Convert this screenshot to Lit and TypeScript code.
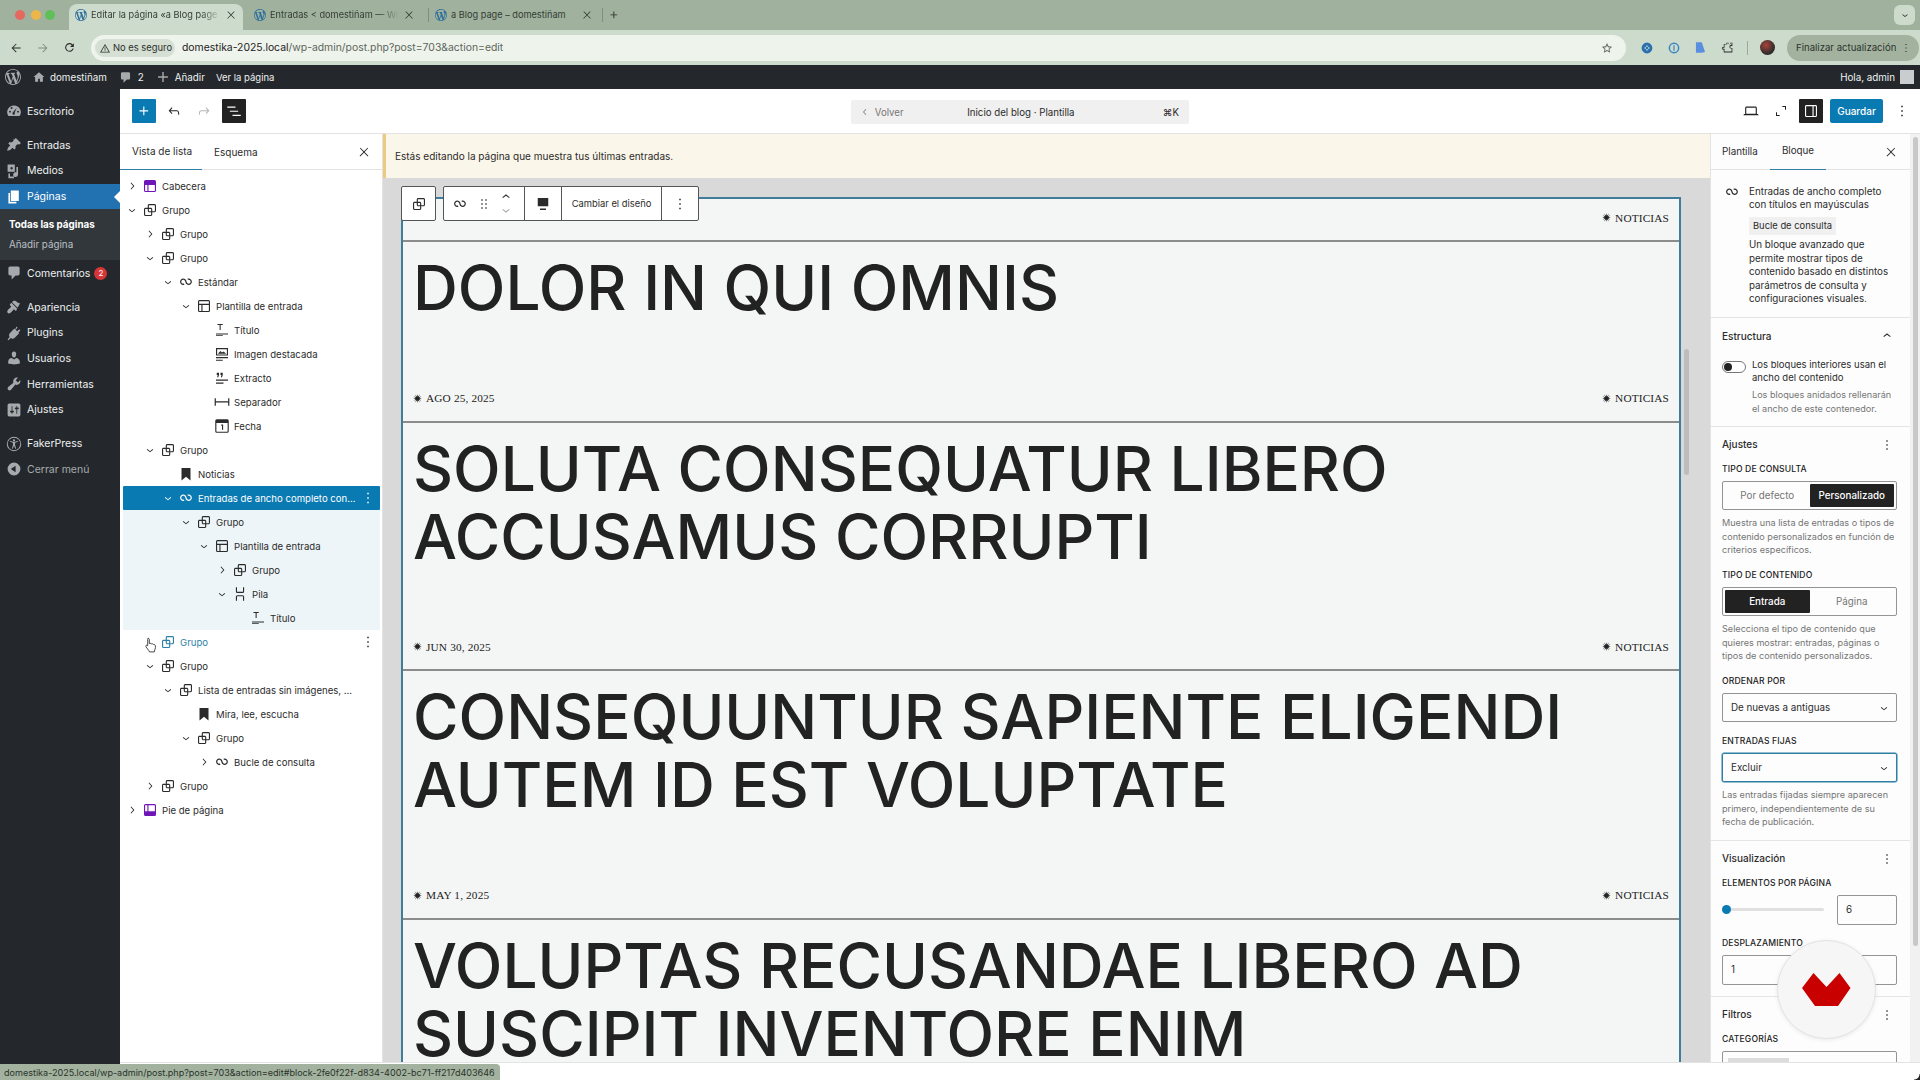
import { LitElement, html, css, svg } from "lit";
import { customElement } from "lit/decorators.js";

const P: Record<string, string> = {
  group: "M18 4h-7c-1.100 0-2 .9-2 2v3H6c-1.100 0-2 .9-2 2v7c0 1.100.9 2 2 2h7c1.100 0 2-.9 2-2v-3h3c1.100 0 2-.9 2-2V6c0-1.100-.9-2-2-2zm-4.500 14c0 .3-.2.5-.5.5H6c-.3 0-.5-.2-.5-.5v-7c0-.3.2-.5.5-.5h3V13c0 1.100.9 2 2 2h2.500v3zm0-4.500H11c-.3 0-.5-.2-.5-.5v-2.500H13c.3 0 .5.2.5.5v2.500zm5-.5c0 .3-.2.5-.5.5h-3V11c0-1.100-.9-2-2-2h-2.500V6c0-.3.2-.5.5-.5h7c.3 0 .5.2.5.5v7z",
  loop: "M18.182 11.639C18.182 13.080 17.014 14.249 15.573 14.249C14.358 14.249 13.335 13.418 13.045 12.292L13.038 12.262L13.028 12.233L12.398 10.377L12.394 10.378C11.857 8.650 10.246 7.394 8.340 7.394C5.995 7.394 4.094 9.295 4.094 11.639C4.094 13.984 5.995 15.884 8.340 15.884C8.885 15.884 9.408 15.781 9.889 15.592L9.292 14.070C8.998 14.185 8.677 14.249 8.340 14.249C6.898 14.249 5.730 13.080 5.730 11.639C5.730 10.198 6.898 9.030 8.340 9.030C9.554 9.030 10.577 9.860 10.867 10.986L10.877 11.026L10.891 11.065L11.507 12.864L11.513 12.861C12.041 14.609 13.665 15.884 15.573 15.884C17.917 15.884 19.818 13.984 19.818 11.639C19.818 9.295 17.917 7.394 15.573 7.394C15.012 7.394 14.484 7.503 14.002 7.701L14.623 9.214C14.910 9.096 15.227 9.030 15.573 9.030C17.014 9.030 18.182 10.198 18.182 11.639Z",
  header: "M18.500 10.500H10v8h8a.5.5 0 00.5-.5v-7.500zm-10 0h-3V18a.5.5 0 00.5.5h2.500v-8zM6 4h12a2 2 0 012 2v12a2 2 0 01-2 2H6a2 2 0 01-2-2V6a2 2 0 012-2z",
  footer: "M18 5.500h-8v8h8.500V6a.5.5 0 00-.5-.5zm-9.500 8h-3V6a.5.5 0 01.5-.5h2.500v8zM6 4h12a2 2 0 012 2v12a2 2 0 01-2 2H6a2 2 0 01-2-2V6a2 2 0 012-2z",
  template: "M18 5.500H6a.5.5 0 00-.5.5v3h13V6a.5.5 0 00-.5-.5zm.5 5H10v8h8a.5.5 0 00.5-.5v-7.500zm-10 0h-3V18a.5.5 0 00.5.5h2.500v-8zM6 4h12a2 2 0 012 2v12a2 2 0 01-2 2H6a2 2 0 01-2-2V6a2 2 0 012-2z",
  title: "M4 16.500h16V18H4zM4 20h9v-1H4zM6 4h7v1.300H10.200V12H8.800V5.300H6z",
  image: "M4 4h16v10H4zm1.500 1.500v7h13v-7zM7 11l3-3 2 2 2-1.500 3 2.500v.5H7zM4 16h16v1.500H4zM4 19.500h9V21H4z",
  excerpt: "M5 5h3v3l-1 3H5.500l.8-3H5zm5 0h3v3l-1 3h-1.500l.8-3H10zM4 14h16v1.500H4zM4 18h10v1.500H4z",
  sep: "M20.200 7v4H3.800V7H2.200v10h1.600v-4.500h16.400V17h1.600V7z",
  date: "M19 3H5a2 2 0 00-2 2v14a2 2 0 002 2h14a2 2 0 002-2V5a2 2 0 00-2-2zm.5 16a.5.5 0 01-.5.5H5a.5.5 0 01-.5-.5V8h15v11zM11 10h2.500v7H12v-5.500h-1z",
  bookmark: "M6 4h12v16.500l-6-4.700-6 4.700z",
  stack: "M17.500 3v5.500a2 2 0 01-2 2h-7a2 2 0 01-2-2V3H8v5.500a.5.5 0 00.5.5h7a.5.5 0 00.5-.5V3h1.500zm0 18v-5.500a2 2 0 00-2-2h-7a2 2 0 00-2 2V21H8v-5.500a.5.5 0 01.5-.5h7a.5.5 0 01.5.5V21h1.500z",
  kebab: "M13 19h-2v-2h2v2zm0-6h-2v-2h2v2zm0-6h-2V5h2v2z",
  close: "M13 11.800l6.100-6.300-1-1-6.100 6.200-6.100-6.200-1 1 6.100 6.300-6.500 6.700 1 1L12 13.100l6.500 6.400 1-1z",
  plus: "M11 12.500V17.500H12.500V12.500H17.500V11H12.500V6H11V11H6V12.500H11Z",
  undo: "M18.300 11.700c-.6-.6-1.400-.9-2.300-.9H6.700l2.900-3.300-1.100-1-4.500 5L8.500 16.500l1.100-1-2.900-3.300H16c.5 0 .9.2 1.300.5 1 1 1 3.400 1 4.500v.3h1.500v-.2c0-1.500 0-4.300-1.500-5.800z",
  redo: "M15.600 6.500l-1.100 1 2.900 3.300H8c-.9 0-1.700.3-2.300.9-1.400 1.500-1.400 4.200-1.400 5.600v.2h1.500v-.3c0-1.100 0-3.500 1-4.500.3-.3.7-.5 1.300-.5h9.200L14.500 15.500l1.100 1 4.500-5-4.500-5z",
  listview: "M3 6h11v1.500H3V6zm3.500 5.500h11V13h-11v-1.500zM21 17H10v1.500h11V17z",
  laptop: "M20.500 16h-.7V8c0-1.100-.9-2-2-2H6.200c-1.100 0-2 .9-2 2v8h-.7c-.8 0-1.500.7-1.500 1.500h20c0-.8-.7-1.500-1.500-1.500zM5.700 8c0-.3.2-.5.5-.5h11.600c.3 0 .5.2.5.5v7.600H5.700V8z",
  expand: "M6 14H4.500v5.500H10V18H6v-4zM14 4.500V6h4v4h1.500V4.500H14z",
  sidebar: "M18 4H6c-1.100 0-2 .9-2 2v12c0 1.100.9 2 2 2h12c1.100 0 2-.9 2-2V6c0-1.100-.9-2-2-2zM5.500 18V6c0-.3.2-.5.5-.5h8v13H6c-.3 0-.5-.2-.5-.5zm13 0c0 .3-.2.5-.5.5h-2.500v-13H18c.3 0 .5.2.5.5v12z",
  drag: "M8 7h2V5H8v2zm0 6h2v-2H8v2zm0 6h2v-2H8v2zm6-14v2h2V5h-2zm0 8h2v-2h-2v2zm0 6h2v-2h-2v2z",
  up: "M6.500 12.400L12 8l5.500 4.400-.9 1.200L12 10l-4.500 3.600-1-1.200z",
  down: "M17.500 11.600L12 16l-5.500-4.400.9-1.200L12 14l4.500-3.600 1 1.200z",
  right: "M10.600 6L9.500 7l4.600 5-4.600 5 1.100 1 5.500-6z",
  left: "M14.600 7l-1.200-1L8 12l5.400 6 1.200-1-4.600-5z",
  align: "M5 4h14v11H5zM8 18h8v2H8z",
  wp: "M20 10c0-5.510-4.490-10-10-10C4.480 0 0 4.490 0 10c0 5.520 4.480 10 10 10 5.510 0 10-4.480 10-10zM7.780 15.370L4.370 6.220c.55-.02 1.170-.08 1.170-.08.5-.06.44-1.130-.06-1.110 0 0-1.450.11-2.370.11-.18 0-.37 0-.58-.01C4.120 2.690 6.870 1.090 10 1.090c2.330 0 4.450.87 6.050 2.340-.68-.11-1.650.39-1.650 1.580 0 .74.45 1.360.9 2.100.35.61.55 1.360.55 2.460 0 1.490-1.400 5-1.400 5l-3.030-8.370c.54-.02.82-.17.82-.17.5-.05.44-1.250-.06-1.220 0 0-1.440.12-2.380.12-.87 0-2.330-.12-2.330-.12-.5-.03-.56 1.200-.06 1.220l.92.08 1.260 3.410zM17.410 10c.24-.64.74-1.870.43-4.250.7 1.290 1.050 2.710 1.050 4.250 0 3.290-1.730 6.240-4.400 7.780.97-2.590 1.940-5.200 2.920-7.780zM6.100 18.090C3.120 16.650 1.110 13.530 1.110 10c0-1.300.23-2.480.72-3.590C3.250 10.300 4.670 14.200 6.100 18.090zm4.030-6.630l2.580 6.980c-.86.29-1.760.45-2.710.45-.79 0-1.570-.11-2.290-.33.81-2.380 1.620-4.740 2.420-7.100z",
  home: "M10 2L1 10h2.500v8h5v-5h3v5h5v-8H19z",
  comment: "M5 2h10c1.100 0 2 .9 2 2v7c0 1.100-.9 2-2 2h-3l-5 5v-5H5c-1.100 0-2-.9-2-2V4c0-1.100.9-2 2-2z",
  addnew: "M9 3h2v6h6v2h-6v6H9v-6H3V9h6z",
  gauge: "M10 3a8.500 8.500 0 00-7 13.300h14A8.500 8.500 0 0010 3zM5 12a1.200 1.200 0 110-2.400A1.200 1.200 0 015 12zm2-4.500a1.200 1.200 0 110-2.400 1.200 1.200 0 010 2.400zM10 15a2 2 0 01-1-3.700L13.500 6l-2.700 6.300A2 2 0 0110 15zm5-3a1.200 1.200 0 110-2.400 1.200 1.200 0 010 2.400z",
  pin: "M10.440 3.020l1.820-1.820 6.360 6.350-1.830 1.820c-1.050-.68-2.480-.57-3.410.36l-.75.75c-.92.93-1.040 2.350-.35 3.410l-1.830 1.820-2.410-2.420-2.830 2.830-3.820 1.060 1.060-3.820 2.830-2.830-2.410-2.410 1.820-1.830c1.060.69 2.480.57 3.410-.36l.75-.75c.93-.92 1.050-2.350.36-3.410z",
  media: "M2 2h9v9H2zm5 6a1.500 1.500 0 100-3 1.500 1.500 0 000 3zM13 5h2v9.500a3 3 0 11-2-2.800zM3 13h2v4h5v2H3z",
  pages: "M6 15V2h10v13H6zm-1 1h8v2H3V5h2v11z",
  brush: "M14.500 11L7.500 4l1.500-1.500c.5-.5 2.300-.5 3.500.3 1.200.8 1.400 1.300 2.700 2 1.200.7 2.100.5 2.600.1zM13.800 11.800L6.700 4.700 5 6.500c-.4.4-.4 1 0 1.400l1 1c.4.4.4 1 0 1.400-1.700 1.700-4.500 3-4.500 5.700 0 1 1 2 2 2 2.700 0 4-2.800 5.700-4.500.4-.4 1-.4 1.400 0l1 1c.4.4 1 .4 1.400 0z",
  plug: "M13.100 2l1.400 1.400-2.500 2.500 2 2 2.500-2.500L18 6.900l-2.500 2.500 1 1-5.500 5.500c-1.500 1.500-3.500 1.500-5 .5L3 19l-1-1 2.500-3c-1-1.500-1-3.500.5-5l5.500-5.500 1 1z",
  user: "M10 9.250c-2.270 0-2.730-3.440-2.730-3.440C7 4.020 7.820 2 9.970 2c2.160 0 2.980 2.020 2.710 3.810 0 0-.41 3.440-2.680 3.440zm0 2.570L12.720 10c2.390 0 4.520 2.330 4.520 4.530v2.490s-3.650 1.130-7.240 1.130c-3.650 0-7.240-1.130-7.240-1.130v-2.490c0-2.250 1.940-4.480 4.470-4.480z",
  wrench: "M16.680 9.770c-1.340 1.340-3.300 1.670-4.950.99l-5.410 6.520c-.99.99-2.590.99-3.570 0-.99-.98-.99-2.580 0-3.570l6.520-5.420c-.68-1.650-.35-3.610.99-4.950 1.280-1.280 3.120-1.620 4.720-1.060l-2.890 2.890 2.820 2.820 2.860-2.870c.53 1.580.18 3.390-1.090 4.670z",
  sliders: "M18 16V4c0-1.100-.9-2-2-2H4c-1.100 0-2 .9-2 2v12c0 1.100.9 2 2 2h12c1.100 0 2-.9 2-2zM8 11h1c.55 0 1 .45 1 1s-.45 1-1 1H8v1.500c0 .28-.22.5-.5.5s-.5-.22-.5-.5V13H6c-.55 0-1-.45-1-1s.45-1 1-1h1V5.500c0-.28.22-.5.5-.5s.5.22.5.5V11zm5-2h-1c-.55 0-1-.45-1-1s.45-1 1-1h1V5.500c0-.28.22-.5.5-.5s.5.22.5.5V7h1c.55 0 1 .45 1 1s-.45 1-1 1h-1v5.500c0 .28-.22.5-.5.5s-.5-.22-.5-.5V9z",
  access: "M10 1a9 9 0 100 18 9 9 0 000-18zm0 1.200a7.800 7.800 0 110 15.600 7.800 7.800 0 010-15.600zM10 4a1.400 1.400 0 110 2.800A1.400 1.400 0 0110 4zM5 7.300l3.700 1v2.500L7.400 15.500l1.100.4L10 12l1.500 3.900 1.100-.4-1.300-4.700V8.300l3.700-1-.3-1.100-3.400.9H8.700l-3.400-.9z",
  collapse: "M10 2a8 8 0 110 16 8 8 0 010-16zm2 4l-6 4 6 4z",
  warn: "M12 4L2 21h20zm0 3l7.400 12.500H4.600zM11.200 10.500h1.600v5h-1.600zm0 6h1.600v1.600h-1.600z",
  back: "M20 11.200H7.400l5.600-5.600L11.900 4.500 4.400 12l7.500 7.500 1.100-1.100-5.600-5.600H20z",
  fwd: "M4 11.200h12.600L11 5.600l1.100-1.100 7.500 7.500-7.500 7.500-1.100-1.100 5.600-5.600H4z",
  reload: "M17.700 6.300A8 8 0 1019.700 14h-2.100a6 6 0 11-1.400-6.200L13 11h7V4z",
  star: "M12 3.500l2.600 5.600 6.100.7-4.500 4.200 1.200 6-5.400-3-5.400 3 1.200-6L3.300 9.800l6.100-.7zm0 3.600L10.400 10.600l-3.800.4 2.800 2.600-.8 3.700L12 15.500l3.400 1.800-.8-3.700 2.800-2.600-3.800-.4z",
  puzzle: "M10 3h4v2a1.500 1.500 0 003 0V3h4v6h-2a2 2 0 000 4h2v8H5v-5H4a2.500 2.500 0 010-5h1V6h5zm-3.500 4.500v5H4a1 1 0 000 2h2.500v5h13v-5.500H19a3.500 3.500 0 010-7h.5v-3h-1.200a3 3 0 01-5.600 0h-1.200v2z",
  ext1: "M10 1a9 9 0 100 18 9 9 0 000-18zm0 4l2 3h-4zm5 5l-3 2V8zm-5 5l-2-3h4zm-5-5l3-2v4z",
  ext2: "M10 1a9 9 0 100 18 9 9 0 000-18zm0 2.500a6.500 6.500 0 110 13 6.500 6.500 0 010-13zM9 5.500h2v9H9z",
  ext3: "M3 2h9l5 15-5 1H3z",
};

const ic = (n: string, size = 18, vb = 24) =>
  html`<svg class="ic" width=${size} height=${size} viewBox="0 0 ${vb} ${vb}" fill="currentColor" aria-hidden="true">${svg`<path fill-rule="evenodd" d=${P[n]}></path>`}</svg>`;

const STAR_POINTS = Array.from({ length: 24 }, (_, i) => {
  const a = (i * Math.PI) / 12;
  const r = i % 2 === 0 ? 5 : 2.1;
  return `${(5 + r * Math.sin(a)).toFixed(2)},${(5 - r * Math.cos(a)).toFixed(2)}`;
}).join(" ");
const burst = html`<svg class="ic" width="9" height="9" viewBox="0 0 10 10" fill="#222" aria-hidden="true">${svg`<polygon points=${STAR_POINTS}></polygon>`}</svg>`;

type Row = { d: number; t: string; i: string; c?: "o" | "c"; k?: string };
const ROWS: Row[] = [
  { d: 0, t: "Cabecera", i: "header", c: "c", k: "violet" },
  { d: 0, t: "Grupo", i: "group", c: "o" },
  { d: 1, t: "Grupo", i: "group", c: "c" },
  { d: 1, t: "Grupo", i: "group", c: "o" },
  { d: 2, t: "Estándar", i: "loop", c: "o" },
  { d: 3, t: "Plantilla de entrada", i: "template", c: "o" },
  { d: 4, t: "Título", i: "title" },
  { d: 4, t: "Imagen destacada", i: "image" },
  { d: 4, t: "Extracto", i: "excerpt" },
  { d: 4, t: "Separador", i: "sep" },
  { d: 4, t: "Fecha", i: "date" },
  { d: 1, t: "Grupo", i: "group", c: "o" },
  { d: 2, t: "Noticias", i: "bookmark" },
  { d: 2, t: "Entradas de ancho completo con...", i: "loop", c: "o", k: "sel" },
  { d: 3, t: "Grupo", i: "group", c: "o", k: "tint" },
  { d: 4, t: "Plantilla de entrada", i: "template", c: "o", k: "tint" },
  { d: 5, t: "Grupo", i: "group", c: "c", k: "tint" },
  { d: 5, t: "Pila", i: "stack", c: "o", k: "tint" },
  { d: 6, t: "Título", i: "title", k: "tint" },
  { d: 1, t: "Grupo", i: "group", k: "hover" },
  { d: 1, t: "Grupo", i: "group", c: "o" },
  { d: 2, t: "Lista de entradas sin imágenes, ...", i: "group", c: "o" },
  { d: 3, t: "Mira, lee, escucha", i: "bookmark" },
  { d: 3, t: "Grupo", i: "group", c: "o" },
  { d: 4, t: "Bucle de consulta", i: "loop", c: "c" },
  { d: 1, t: "Grupo", i: "group", c: "c" },
  { d: 0, t: "Pie de página", i: "footer", c: "c", k: "violet" },
];

const POSTS = [
  { t: ["DOLOR IN QUI OMNIS"], date: "AGO 25, 2025" },
  { t: ["SOLUTA CONSEQUATUR LIBERO", "ACCUSAMUS CORRUPTI"], date: "JUN 30, 2025" },
  { t: ["CONSEQUUNTUR SAPIENTE ELIGENDI", "AUTEM ID EST VOLUPTATE"], date: "MAY 1, 2025" },
  { t: ["VOLUPTAS RECUSANDAE LIBERO AD", "SUSCIPIT INVENTORE ENIM"], date: "" },
];

@customElement("app-root")
export class AppRoot extends LitElement {
  static styles = css`
    :host { display: block; width: 1920px; height: 1080px; overflow: hidden; position: relative; font-family: Inter, "Liberation Sans", sans-serif; font-size: 10px; color: #2b2b2b; background: #fff; }
    * { box-sizing: border-box; }
    .ic { display: block; flex: none; }
    .tabs { height: 30px; background: #a0b19e; display: flex; align-items: flex-end; padding-left: 14px; position: relative; }
    .lights { display: flex; gap: 5px; width: 55px; align-self: center; padding-left: 1px; }
    .lights i { width: 10px; height: 10px; border-radius: 50%; background: #e5695f; }
    .lights i:nth-child(2) { background: #edb64a; margin-left: 1px; }
    .lights i:nth-child(3) { background: #5fc05a; margin-left: -1px; }
    .tab { width: 180px; height: 26px; display: flex; align-items: center; gap: 4px; padding: 0 13px 5px 6px; font-size: 9.200px; color: #333c33; position: relative; flex: none; }
    .tab.n3 { width: 173px; padding-right: 9px; }
    .tab.on { width: 174px; background: #cddbcc; border-radius: 8px 8px 0 0; padding-right: 6px; margin-right: 5px; }
    .tab .fav { width: 12px; height: 12px; color: #2c6e9c; flex: none; }
    .tab .lbl { flex: 1; white-space: nowrap; overflow: hidden; -webkit-mask-image: linear-gradient(90deg, #000 85%, transparent); mask-image: linear-gradient(90deg, #000 85%, transparent); }
    .tab.n3 .lbl { -webkit-mask-image: none; mask-image: none; }
    .tab .x { width: 12px; height: 12px; flex: none; }
    .tdiv { width: 1px; height: 14px; background: #7f8f7e; align-self: center; flex: none; }
    .tplus { margin-left: 4px; align-self: center; }
    .tmenu { margin-left: auto; margin-right: 5px; width: 21px; height: 20px; border-radius: 6px; background: #cddbcc; align-self: center; display: flex; align-items: center; justify-content: center; }
    .bar { height: 35px; background: #cddbcc; display: flex; align-items: center; padding-left: 9px; gap: 0; }
    .bar .nav { width: 27px; display: flex; justify-content: flex-start; }
    .bar .dim { color: #7e8c7d; }
    .omni { width: 1535px; height: 26px; margin-left: 1px; border-radius: 13px; background: #eef3ec; display: flex; align-items: center; padding: 0 12px 0 4px; font-size: 10.400px; color: #5d665c; white-space: pre; }
    .chip { height: 18px; width: 80px; padding: 0 4px; border-radius: 9px; background: #d5dfd3; display: flex; align-items: center; gap: 2px; color: #2b302b; font-size: 9.400px; margin-right: 7px; white-space: nowrap; }
    .omni b { font-weight: 400; color: #222; }
    .omni .sp { flex: 1; }
    .ext { display: flex; align-items: center; margin-left: 7px; gap: 0; }
    .ext span { width: 27px; display: flex; justify-content: center; }
    .ext .c1 { color: #2a6fb0; }
    .ext .c2 { color: #3b85c4; }
    .ext .c3 { color: #5a8fe0; }
    .ext .dvd { width: 1px; height: 14px; background: #9aa999; margin: 0 12px 0 6px; }
    .avatar { width: 15px; height: 15px; border-radius: 50%; background: radial-gradient(circle at 40% 35%, #a8443a, #302c2c 65%); }
    .upd { margin-left: 12px; width: 132px; height: 26px; border-radius: 13px; background: #a2b29f; display: flex; align-items: center; padding-left: 9px; font-size: 9.600px; color: #2c332c; white-space: nowrap; }
    .admin { height: 24px; background: #24282c; color: #eef0f1; display: flex; align-items: center; font-size: 9.800px; padding-left: 5px; }
    .admin .it { display: flex; align-items: center; gap: 5px; margin-right: 12px; white-space: nowrap; }
    .admin .it.c { gap: 6px; }
    .admin .it.a { margin-right: 11px; }
    .admin .it.v { font-size: 9.500px; }
    .admin .ic { color: #a7aaad; }
    .admin .rt { margin-left: auto; display: flex; align-items: center; gap: 5px; padding-right: 6px; }
    .admin .ava { width: 14px; height: 14px; background: #c9cdd0; }
    .main { height: 991px; display: flex; position: relative; }
    .menu { width: 120px; height: 976px; background: #24282c; color: #eef0f1; padding-top: 9.500px; font-size: 10.500px; flex: none; }
    .mi { height: 25.600px; display: flex; align-items: center; gap: 5px; padding-left: 6px; position: relative; white-space: nowrap; }
    .mi .ic { color: #a7aaad; }
    .mi.sepb { margin-bottom: 8.500px; }
    .mi.cur { background: #2271b1; color: #fff; }
    .mi.cur .ic { color: #fff; }
    .mi.cur::after { content: ""; position: absolute; right: 0; top: 7px; border: 6px solid transparent; border-right-color: #fff; border-left: 0; }
    .sub { height: 51px; background: #32373c; padding: 5px 0 0 9px; font-size: 9.800px; color: #bcc0c4; }
    .sub div { height: 20px; display: flex; align-items: center; }
    .sub .act { color: #fff; font-weight: 700; }
    .badge { width: 13px; height: 13px; border-radius: 50%; background: #d63638; color: #fff; font-size: 8px; display: flex; align-items: center; justify-content: center; margin-left: -1px; }
    .mi.mut { color: #a7aaad; }
    .ed { flex: 1; min-width: 0; height: 991px; display: flex; flex-direction: column; background: #fff; }
    .top { height: 45px; flex: none; border-bottom: 1px solid #e3e3e3; display: flex; align-items: center; padding: 0 0 0 12px; position: relative; }
    .tb { width: 24px; height: 24px; display: flex; align-items: center; justify-content: center; border-radius: 1px; color: #222; flex: none; }
    .tb.blue { background: #0a7ab2; color: #fff; }
    .tb.blk { background: #222; color: #fff; }
    .tb.dim { color: #b5b5b5; }
    .g6 { margin-left: 6px; }
    .cmd { position: absolute; left: 731px; top: 11px; width: 338px; height: 24px; background: #f0f0f0; border-radius: 2px; display: flex; align-items: center; padding: 0 10px 0 8px; font-size: 9.700px; }
    .cmd .v { width: 86px; display: flex; align-items: center; color: #777; gap: 1px; }
    .cmd .c { flex: 1; text-align: center; padding-right: 66px; }
    .rt2 { margin-left: auto; display: flex; align-items: center; }
    .save { width: 53px; height: 24px; margin: 0 7px 0 7px; background: #0a7ab2; color: #fff; display: flex; align-items: center; justify-content: center; border-radius: 2px; font-size: 10px; font-weight: 500; }
    .rt2 .end { margin-right: 6px; }
    .work { flex: 1; min-height: 0; display: flex; }
    .lp { width: 263px; flex: none; border-right: 1px solid #e3e3e3; background: #fff; }
    .ptabs { height: 36px; border-bottom: 1px solid #e3e3e3; display: flex; align-items: center; position: relative; }
    .ptab { height: 36px; display: flex; align-items: center; position: relative; }
    .lp .ptab.a { width: 82px; padding-left: 12px; border-bottom: 1.500px solid #2f7ea5; }
    .lp .ptab.b { padding-left: 12px; }
    .ptabs .cl { margin-left: auto; margin-right: 11px; }
    .list { margin: 4px 2px 0 3px; }
    .row { height: 24px; display: flex; align-items: center; position: relative; white-space: nowrap; font-size: 9.600px; }
    .row .chev { width: 18px; display: flex; justify-content: center; }
    .row .ico { width: 18px; display: flex; justify-content: center; }
    .row .t { margin-left: 3px; }
    .row.violet .ico { color: #6f16b9; }
    .row.sel { background: #0a7ab2; color: #fff; border-radius: 1px; }
    .row.tint { background: #eef5f8; }
    .row.hover .t, .row.hover .ico { color: #2d7fa6; }
    .row .kb { position: absolute; right: 3px; top: 3px; }
    .canvas { flex: 1; min-width: 0; background: #d9d9d9; overflow: hidden; position: relative; }
    .notice { height: 44px; background: #fbf6ea; border-left: 3px solid #ecca80; display: flex; align-items: center; padding-left: 9px; }
    .frame { margin: 19px 29px 0 18px; border: 2px solid #3f7d9b; border-bottom: 0; background: #f4f6f5; }
    .topm { height: 41px; padding-bottom: 4px; }
    .meta { display: flex; align-items: center; justify-content: space-between; padding-left: 10px; padding-right: 10px; font-family: "Liberation Serif", serif; font-size: 11.300px; color: #222; letter-spacing: .15px; }
    .meta span { display: flex; align-items: center; gap: 4px; }
    .mrow { height: 48px; padding-top: 3px; }
    .line { height: 2px; background: #8c8c8c; }
    .post h2 { margin: 0; padding: 12px 10px 50.500px; font: 500 62.100px/68px Inter, sans-serif; color: #222; white-space: nowrap; letter-spacing: 0; }
    .post h2 div { height: 68px; }
    .thumb { position: absolute; right: 21px; top: 215px; width: 5px; height: 126px; background: #bdbdbd; border-radius: 3px; }
    .rp { width: 200px; flex: none; background: #fdfdfd; border-left: 1px solid #e3e3e3; height: 100%; overflow: hidden; font-size: 9.800px; line-height: 13.400px; }
    .rp .ptab.a { padding-left: 11px; width: 59px; }
    .rp .ptab.b { width: 56px; justify-content: center; border-bottom: 1.500px solid #2f7ea5; }
    .rp .ptabs .cl { margin-right: 12px; }
    .sb { width: 10px; flex: none; background: #f1f1f1; display: flex; justify-content: center; padding-top: 3px; }
    .sb i { display: block; width: 5px; height: 809px; background: #c8c8c8; border-radius: 3px; }
    .card { display: flex; padding: 15px 20px 12px 12px; border-bottom: 1px solid #e5e5e5; }
    .card .lic { width: 18px; flex: none; margin-right: 8px; margin-top: -2px; }
    .card p { margin: 0; }
    .tag { display: inline-block; height: 18px; line-height: 18px; width: 87px; text-align: center; background: #f0f0f0; border-radius: 1px; margin: 5px 0 3.500px; font-size: 9.400px; }
    .sec { padding: 11px 13px 11px 11px; border-bottom: 1px solid #e5e5e5; }
    .sh { height: 14px; display: flex; align-items: center; justify-content: space-between; font-weight: 500; font-size: 10px; }
    .sh .ic { margin-right: 2px; }
    .tg { display: flex; gap: 6px; margin-top: 14.500px; font-size: 9.500px; }
    .sw { width: 24px; height: 12px; border: 1px solid #777; border-radius: 6px; flex: none; margin-top: 3px; position: relative; background: #fff; }
    .sw::before { content: ""; position: absolute; left: 1px; top: 1px; width: 8px; height: 8px; border-radius: 50%; background: #222; }
    .hp { color: #757575; font-size: 9.100px; }
    .tgh { margin: 3.500px 0 0 30px; }
    .lb { display: block; height: 12px; line-height: 12px; font-size: 8.600px; font-weight: 500; color: #222; letter-spacing: .15px; margin: 12.500px 0 6px; white-space: nowrap; }
    .lb.f { margin-top: 11.500px; }
    .seg { height: 29px; border: 1px solid #949494; border-radius: 2px; display: flex; padding: 2px; }
    .seg div { flex: 1; display: flex; align-items: center; justify-content: center; color: #757575; }
    .seg .on { background: #222; color: #fff; font-weight: 500; border-radius: 1px; }
    .h6 { margin-top: 6px; }
    .sel2 { height: 29.500px; border: 1px solid #949494; border-radius: 2px; display: flex; align-items: center; justify-content: space-between; padding: 0 5px 0 8px; }
    .sel2.foc { border: 1px solid #2f7ea5; box-shadow: 0 0 0 .5px #2f7ea5; }
    .rng { display: flex; align-items: center; height: 29.500px; }
    .tr { width: 102px; height: 3px; background: #e0e0e0; border-radius: 2px; position: relative; margin-right: 13px; }
    .tr::before { content: ""; position: absolute; left: 0; top: -3px; width: 9px; height: 9px; border-radius: 50%; background: #0a7ab2; }
    .inp { height: 29.500px; border: 1px solid #949494; border-radius: 2px; display: flex; align-items: center; padding-left: 8px; flex: 1; }
    .chipg { width: 61px; height: 12px; background: #dcdcdc; margin-left: -3px; align-self: flex-start; margin-top: 6px; }
    .foot { height: 18px; flex: none; border-top: 1px solid #e3e3e3; background: #fff; }
    .status { position: absolute; left: 0; bottom: 0; width: 500px; height: 16px; background: #a2b29f; border-radius: 0 4px 0 0; padding-left: 4px; display: flex; align-items: center; font-size: 9.050px; color: #2b322b; white-space: nowrap; }
    .btool { position: absolute; left: 18px; top: 52px; display: flex; gap: 7px; z-index: 3; }
    .bx { height: 35px; border: 1px solid #555; border-radius: 2px; background: #fff; display: flex; align-items: stretch; font-size: 9.400px; }
    .bx > div { display: flex; align-items: center; justify-content: center; border-left: 1px solid #555; }
    .bx > div:first-child { border-left: 0; }
    .moves { display: flex; flex-direction: column; margin-top: -1px; }
    .moves .ic + .ic { color: #aaa; margin-top: -3px; }
    .g1 { width: 33px; }
    .bx > .g2 { width: 80px; gap: 6.500px; padding-left: 7px; justify-content: flex-start; }
    .g3 { width: 37px; }
    .g4 { width: 100px; }
    .g5 { width: 37px; }
    .cursor { position: absolute; left: 145px; top: 637px; z-index: 4; }
    .brand { position: absolute; left: 1777px; top: 940px; width: 99px; height: 99px; border-radius: 50%; background: #f6f6f6; border: 1px solid #e3e3e3; box-shadow: 0 1px 4px rgba(0,0,0,.08); display: flex; align-items: center; justify-content: center; z-index: 5; }
    .corner { position: absolute; right: 0; bottom: 0; width: 6px; height: 6px; background: radial-gradient(circle at 0 0, transparent 5px, #222 6px); }
  `;

  private row(r: Row) {
    const cls = `row ${r.k ?? ""}`;
    return html`<div class=${cls} style="padding-left:${18 * r.d}px">
      <span class="chev">${r.c === "o" ? ic("down", 14) : r.c === "c" ? ic("right", 14) : ""}</span>
      <span class="ico">${ic(r.i, 18)}</span>
      <span class="t">${r.t}</span>
      ${r.k === "sel" || r.k === "hover" ? html`<span class="kb">${ic("kebab", 18)}</span>` : ""}
    </div>`;
  }

  private mi(t: string, i: string, cls = "") {
    return html`<div class="mi ${cls}">${ic(i, 16, 20)}<span>${t}</span></div>`;
  }

  private post(p: { t: string[]; date: string }) {
    return html`<div class="post">
      <div class="line"></div>
      <h2>${p.t.map((l) => html`<div>${l}</div>`)}</h2>
      <div class="meta mrow"><span>${burst}${p.date}</span><span>${burst}NOTICIAS</span></div>
    </div>`;
  }

  render() {
    return html`
      <div class="tabs">
        <div class="lights"><i></i><i></i><i></i></div>
        <div class="tab on"><span class="fav">${ic("wp", 12, 20)}</span><span class="lbl">Editar la página «a Blog page</span><span class="x">${ic("close", 12)}</span></div>
        <div class="tab"><span class="fav">${ic("wp", 12, 20)}</span><span class="lbl">Entradas &lt; domestiñam — Wo</span><span class="x">${ic("close", 12)}</span></div>
        <div class="tdiv"></div>
        <div class="tab n3"><span class="fav">${ic("wp", 12, 20)}</span><span class="lbl">a Blog page – domestiñam</span><span class="x">${ic("close", 12)}</span></div>
        <div class="tdiv"></div>
        <span class="tplus">${ic("plus", 14)}</span>
        <div class="tmenu">${ic("down", 12)}</div>
      </div>
      <div class="bar">
        <span class="nav">${ic("back", 14)}</span>
        <span class="nav dim">${ic("fwd", 14)}</span>
        <span class="nav">${ic("reload", 13)}</span>
        <div class="omni"><span class="chip">${ic("warn", 12)}No es seguro</span><b>domestika-2025.local</b><span>/wp-admin/post.php?post=703&amp;action=edit</span><span class="sp"></span>${ic("star", 14)}</div>
        <div class="ext">
          <span class="c1">${ic("ext1", 12, 20)}</span><span class="c2">${ic("ext2", 12, 20)}</span><span class="c3">${ic("ext3", 13, 20)}</span><span>${ic("puzzle", 13)}</span>
          <i class="dvd"></i><i class="avatar"></i>
        </div>
        <div class="upd">Finalizar actualización&nbsp;${ic("kebab", 14)}</div>
      </div>
      <div class="admin">
        <span class="it">${ic("wp", 16, 20)}</span>
        <span class="it">${ic("home", 12, 20)}domestiñam</span>
        <span class="it c">${ic("comment", 13, 20)}2</span>
        <span class="it a">${ic("addnew", 14, 20)}Añadir</span>
        <span class="it v">Ver la página</span>
        <span class="rt">Hola, admin<i class="ava"></i></span>
      </div>
      <div class="main">
        <div class="menu">
          ${this.mi("Escritorio", "gauge", "sepb")}
          ${this.mi("Entradas", "pin")}${this.mi("Medios", "media")}${this.mi("Páginas", "pages", "cur")}
          <div class="sub"><div class="act">Todas las páginas</div><div>Añadir página</div></div>
          <div class="mi sepb">${ic("comment", 16, 20)}<span>Comentarios</span><span class="badge">2</span></div>
          ${this.mi("Apariencia", "brush")}${this.mi("Plugins", "plug")}${this.mi("Usuarios", "user")}${this.mi("Herramientas", "wrench")}${this.mi("Ajustes", "sliders", "sepb")}
          ${this.mi("FakerPress", "access")}${this.mi("Cerrar menú", "collapse", "mut")}
        </div>
        <div class="ed">
          <div class="top">
            <div class="tb blue">${ic("plus", 18)}</div>
            <div class="tb g6">${ic("undo", 16)}</div>
            <div class="tb dim g6">${ic("redo", 16)}</div>
            <div class="tb blk g6">${ic("listview", 18)}</div>
            <div class="cmd"><span class="v">${ic("left", 12)}&nbsp;Volver</span><span class="c">Inicio del blog · Plantilla</span><span>⌘K</span></div>
            <div class="rt2">
              <div class="tb">${ic("laptop", 18)}</div>
              <div class="tb g6">${ic("expand", 16)}</div>
              <div class="tb blk g6">${ic("sidebar", 18)}</div>
              <div class="save">Guardar</div>
              <div class="tb end">${ic("kebab", 18)}</div>
            </div>
          </div>
          <div class="work">
            <div class="lp">
              <div class="ptabs"><div class="ptab a">Vista de lista</div><div class="ptab b">Esquema</div><span class="cl">${ic("close", 14)}</span></div>
              <div class="list">${ROWS.map((r) => this.row(r))}</div>
            </div>
            <div class="canvas">
              <div class="notice">Estás editando la página que muestra tus últimas entradas.</div>
              <div class="frame">
                <div class="meta topm"><span></span><span>${burst}NOTICIAS</span></div>
                ${POSTS.map((p) => this.post(p))}
              </div>
              <div class="thumb"></div>
              <div class="btool">
                <div class="bx"><div class="g1">${ic("group", 18)}</div></div>
                <div class="bx">
                  <div class="g2">${ic("loop", 18)}${ic("drag", 16)}<span class="moves">${ic("up", 16)}${ic("down", 16)}</span></div>
                  <div class="g3">${ic("align", 18)}</div>
                  <div class="g4">Cambiar el diseño</div>
                  <div class="g5">${ic("kebab", 18)}</div>
                </div>
              </div>
            </div>
            <div class="rp">
              <div class="ptabs"><div class="ptab a">Plantilla</div><div class="ptab b">Bloque</div><span class="cl">${ic("close", 14)}</span></div>
              <div class="card">
                <span class="lic">${ic("loop", 18)}</span>
                <div>
                  <p>Entradas de ancho completo con títulos en mayúsculas</p>
                  <span class="tag">Bucle de consulta</span>
                  <p>Un bloque avanzado que permite mostrar tipos de contenido basado en distintos parámetros de consulta y configuraciones visuales.</p>
                </div>
              </div>
              <div class="sec">
                <div class="sh">Estructura ${ic("up", 16)}</div>
                <div class="tg"><span class="sw"></span><span>Los bloques interiores usan el ancho del contenido</span></div>
                <div class="hp tgh">Los bloques anidados rellenarán el ancho de este contenedor.</div>
              </div>
              <div class="sec">
                <div class="sh">Ajustes ${ic("kebab", 16)}</div>
                <span class="lb f">TIPO DE CONSULTA</span>
                <div class="seg"><div>Por defecto</div><div class="on">Personalizado</div></div>
                <div class="hp h6">Muestra una lista de entradas o tipos de contenido personalizados en función de criterios específicos.</div>
                <span class="lb">TIPO DE CONTENIDO</span>
                <div class="seg"><div class="on">Entrada</div><div>Página</div></div>
                <div class="hp h6">Selecciona el tipo de contenido que quieres mostrar: entradas, páginas o tipos de contenido personalizados.</div>
                <span class="lb">ORDENAR POR</span>
                <div class="sel2">De nuevas a antiguas ${ic("down", 14)}</div>
                <span class="lb">ENTRADAS FIJAS</span>
                <div class="sel2 foc">Excluir ${ic("down", 14)}</div>
                <div class="hp h6">Las entradas fijadas siempre aparecen primero, independientemente de su fecha de publicación.</div>
              </div>
              <div class="sec">
                <div class="sh">Visualización ${ic("kebab", 16)}</div>
                <span class="lb f">ELEMENTOS POR PÁGINA</span>
                <div class="rng"><div class="tr"></div><div class="inp">6</div></div>
                <span class="lb">DESPLAZAMIENTO</span>
                <div class="inp">1</div>
              </div>
              <div class="sec">
                <div class="sh">Filtros ${ic("kebab", 16)}</div>
                <span class="lb f">CATEGORÍAS</span>
                <div class="inp"><span class="chipg"></span></div>
              </div>
            </div>
            <div class="sb"><i></i></div>
          </div>
          <div class="foot"></div>
        </div>
      </div>
      <div class="status">domestika-2025.local/wp-admin/post.php?post=703&amp;action=edit#block-2fe0f22f-d834-4002-bc71-ff217d403646</div>
      <div class="cursor">
        <svg width="14" height="16" viewBox="0 0 14 16"><path d="M3 1.200c.8 0 1.300.6 1.300 1.300v4l.8-.2c.7 0 1.200.2 1.500.6.8-.3 1.500 0 1.800.5.8-.2 1.700.2 1.900 1 .3 1.300.2 3-.4 4.300-.4.900-.6 1.800-.6 2.200H4.500c-.3-1-1-1.800-2-3L1 9.800c-.4-.6-.2-1.300.3-1.500.4-.2 1-.1 1.400.4V2.500c0-.7 0-1.300.3-1.300z" fill="#fff" stroke="#333" stroke-width=".9"/></svg>
      </div>
      <div class="brand">
        <svg width="49" height="34" viewBox="0 0 49 34"><path d="M11.500 0L24.500 14 37.500 0 48.500 15 36 33H13L0 15z" fill="#c90000"/></svg>
      </div>
      <div class="corner"></div>
    `;
  }
}
